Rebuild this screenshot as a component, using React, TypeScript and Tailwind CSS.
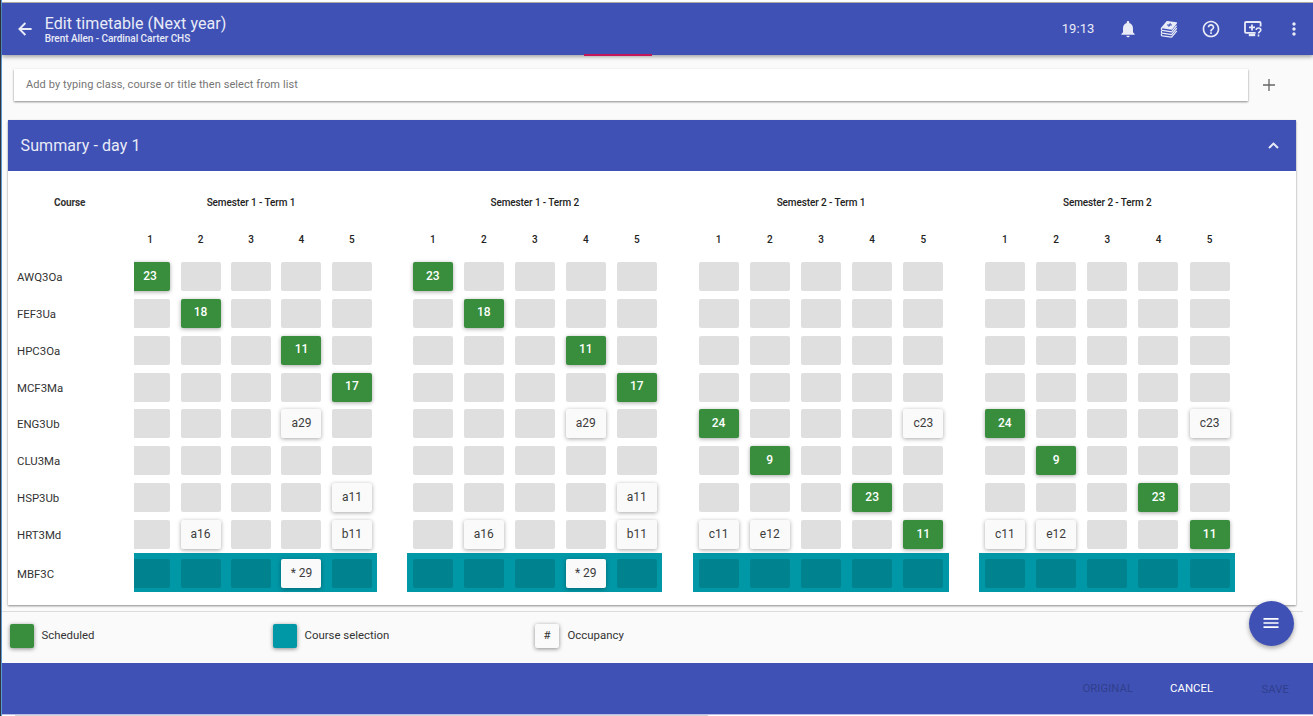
import React from "react";
import { MdNotifications, MdHelpOutline, MdMoreVert, MdMenu } from "react-icons/md";

type Cell = string;

const courses = ["AWQ3Oa", "FEF3Ua", "HPC3Oa", "MCF3Ma", "ENG3Ub", "CLU3Ma", "HSP3Ub", "HRT3Md", "MBF3C"];

// "!" marks a scheduled class; other non-empty values are occupancy cards.
const first: Cell[][] = [
  ["!23", "", "", "", ""],
  ["", "!18", "", "", ""],
  ["", "", "", "!11", ""],
  ["", "", "", "", "!17"],
  ["", "", "", "a29", ""],
  ["", "", "", "", ""],
  ["", "", "", "", "a11"],
  ["", "a16", "", "", "b11"],
  ["", "", "", "* 29", ""],
];

const second: Cell[][] = [
  ["", "", "", "", ""],
  ["", "", "", "", ""],
  ["", "", "", "", ""],
  ["", "", "", "", ""],
  ["!24", "", "", "", "c23"],
  ["", "!9", "", "", ""],
  ["", "", "", "!23", ""],
  ["c11", "e12", "", "", "!11"],
  ["", "", "", "", ""],
];

const terms = [
  { title: "Semester 1 - Term 1", rows: first, box: "w-[243px]", inner: "w-[252.4px] ml-[-9.5px]" },
  { title: "Semester 1 - Term 2", rows: first, box: "w-[255px] ml-[30px]", inner: "w-[255px]" },
  { title: "Semester 2 - Term 1", rows: second, box: "w-[256px] ml-[30.7px]", inner: "w-[256px]" },
  { title: "Semester 2 - Term 2", rows: second, box: "w-[256px] ml-[30.3px]", inner: "w-[256px]" },
];

function Slot({ value, selection }: { value: Cell; selection: boolean }) {
  const base = `flex h-[29px] w-[40px] items-center justify-center rounded-[2px] text-[12px] ${selection ? "pb-[1px]" : "pb-[2px]"}`;
  if (value.startsWith("!"))
    return (
      <div className={`${base} bg-[#388e3c] font-medium text-white shadow-[0_1px_4px_rgba(0,0,0,0.35)]`}>
        {value.slice(1)}
      </div>
    );
  if (value)
    return (
      <div className={`${base} bg-[#fafafa] text-[#3c3c3c] shadow-[0_1px_4px_rgba(0,0,0,0.35)]`}>{value}</div>
    );
  return <div className={`${base} ${selection ? "bg-[#00838f]" : "bg-[#dfdfdf]"}`} />;
}

function Term({ term }: { term: (typeof terms)[number] }) {
  return (
    <section className={`shrink-0 overflow-hidden ${term.box}`}>
      <div className={term.inner}>
        <h3 className="flex h-[62px] items-center justify-center text-[10px] font-medium tracking-[-0.1px] text-[#222]">
          {term.title}
        </h3>
        <div className="grid h-[25.2px] grid-cols-5 text-center text-[10px] leading-[13px] font-medium text-[#222]">
          {[1, 2, 3, 4, 5].map((n) => (
            <span key={n}>{n}</span>
          ))}
        </div>
      </div>
      {term.rows.map((row, i) => (
        <div key={i} className={i === 8 ? "bg-[#0097a7]" : ""}>
          <div className={`grid grid-cols-5 items-center justify-items-center ${term.inner} ${i === 8 ? "h-[39px] pt-[2px]" : "h-[36.85px]"}`}>
            {row.map((value, j) => (
              <Slot key={j} value={value} selection={i === 8} />
            ))}
          </div>
        </div>
      ))}
    </section>
  );
}

function BackIcon() {
  return (
    <svg viewBox="0 0 14 14" className="size-[14px]" fill="none" stroke="currentColor" strokeWidth="1.9">
      <path d="M13.6 7H1.6M7.4 1 1.4 7l6 6" />
    </svg>
  );
}

function BooksIcon() {
  return (
    <svg viewBox="0 0 18 18" className="size-[18px]" fill="none" stroke="currentColor" strokeWidth="1.3" strokeLinejoin="round">
      <path d="M7 1.6 16.4 3 11.6 9 2 7.6Z" fill="currentColor" />
      <path d="M2 7.8c-1 .7-.8 2.1.3 2.6l9.3 1.5 5-6.2" />
      <path d="M1.8 10.9c-.8.8-.5 1.9.5 2.3l9.3 1.4 5.2-6.4" />
      <path d="M1.8 13.5c-.8.8-.5 1.9.5 2.3l9.3 1.4 5.2-6.4" />
      <path d="M7 5h5M10.4 3.2 8.6 6.8" stroke="#3f51b5" strokeWidth="1.1" />
    </svg>
  );
}

function ScreenHelpIcon() {
  return (
    <svg viewBox="0 0 18 16" className="h-[16px] w-[18px]" fill="none" stroke="currentColor" strokeWidth="1.8">
      <path d="M16.6 5.4V2q0-1-1-1H2q-1 0-1 1v8.8q0 1 1 1h9.6" />
      <path d="M4.8 14h6.4" strokeWidth="2.4" />
      <path d="M8 3.4v6M5 6.4h6" />
      <path d="M12.2 9c0-2.8 4.6-2.6 4.6 0 0 1.7-2.3 1.6-2.3 3.6M14.5 13.6v1.8" strokeWidth="1.6" />
    </svg>
  );
}

export default function App() {
  return (
    <div className="flex h-[716px] w-[1313px] overflow-hidden bg-[#fafafa] font-['Roboto',sans-serif] text-[#333]">
      <div className="w-[2px] shrink-0 border-r border-[#5b9bd5] bg-[#34343c]" />
      <div className="flex min-w-0 flex-1 flex-col">
        <div className="h-[3px] shrink-0 border-b border-[#b5b2a8] bg-white" />
        <header className="relative z-10 flex h-[52px] shrink-0 items-center bg-[#3f51b5] pr-[9px] pl-[15.5px] text-[#e9ebf7] shadow-[0_2px_4px_rgba(0,0,0,0.35)]">
          <BackIcon />
          <div className="ml-[13.2px] flex-1 pb-[1px]">
            <h1 className="text-[16px] leading-[19px] tracking-[0.06px]">Edit timetable (Next year)</h1>
            <p className="text-[10px] leading-[11px] font-medium tracking-[-0.05px]">Brent Allen - Cardinal Carter CHS</p>
          </div>
          <span className="text-[13px] tracking-[0.1px]">19:13</span>
          <MdNotifications className="ml-[23px] size-[20px]" />
          <div className="ml-[22.5px]"><BooksIcon /></div>
          <MdHelpOutline className="ml-[23px] size-[20px]" />
          <div className="ml-[23px]"><ScreenHelpIcon /></div>
          <MdMoreVert className="ml-[22px] size-[20px]" />
          <div className="absolute bottom-[-1px] left-[582px] h-[2px] w-[68px] bg-[#c2185b]" />
        </header>

        <div className="flex shrink-0 items-center pt-[14px] pl-[12px]">
          <div className="flex h-[32px] w-[1234px] items-center bg-white pl-[12px] text-[11px] tracking-[0.09px] text-[#757575] shadow-[0_1px_2px_rgba(0,0,0,0.45)]">
            Add by typing class, course or title then select from list
          </div>
          <svg viewBox="0 0 12 12" className="ml-[15px] size-[12px]" stroke="#666" strokeWidth="1.3">
            <path d="M6 0v12M0 6h12" />
          </svg>
        </div>

        <main className="mt-[19px] ml-[6px] flex h-[485px] w-[1288px] shrink-0 flex-col bg-white shadow-[0_1px_2px_rgba(0,0,0,0.45)]">
          <div className="flex h-[51px] shrink-0 items-center justify-between bg-[#3f51b5] pr-[17px] pl-[12.6px] text-[#e9ebf7]">
            <h2 className="pt-[1px] text-[16px] tracking-[0.08px]">Summary - day 1</h2>
            <svg viewBox="0 0 11 7" className="h-[7px] w-[11px]" fill="none" stroke="currentColor" strokeWidth="2">
              <path d="M1 6 5.5 1.6 10 6" />
            </svg>
          </div>
          <div className="flex">
            <div className="w-[126.3px] shrink-0 pl-[9px]">
              <div className="flex h-[87.2px] justify-center pt-[24.5px] pr-[12px] text-[10px] leading-[14px] font-bold tracking-[-0.1px]">Course</div>
              {courses.map((name, i) => (
                <div key={name} className={`flex items-center text-[11.4px] ${i === 8 ? "h-[43px]" : "h-[36.85px] pt-[2px]"}`}>
                  {name}
                </div>
              ))}
            </div>
            {terms.map((term) => (
              <Term key={term.title} term={term} />
            ))}
          </div>
        </main>

        <div className="mt-[6px] h-px w-[1301px] shrink-0 bg-[#dcdcdc]" />
        <div className="flex h-[51px] shrink-0 items-center pb-[3px] pl-[7.5px] text-[11.4px]">
          <div className="flex w-[263.5px] items-center gap-[8px]">
            <span className="size-[24px] rounded-[2px] bg-[#388e3c] shadow-[0_1px_4px_rgba(0,0,0,0.45)]" />
            Scheduled
          </div>
          <div className="flex w-[262px] items-center gap-[7.5px]">
            <span className="size-[24px] rounded-[2px] bg-[#0097a7] shadow-[0_1px_4px_rgba(0,0,0,0.45)]" />
            Course selection
          </div>
          <div className="flex flex-1 items-center gap-[8.5px]">
            <span className="flex size-[24px] items-center justify-center rounded-[2px] bg-[#fafafa] shadow-[0_1px_4px_rgba(0,0,0,0.45)]">#</span>
            Occupancy
          </div>
          <button className="mr-[19.5px] mb-[26px] flex size-[45px] shrink-0 items-center justify-center rounded-full bg-[#3f51b5] text-white shadow-[0_2px_5px_rgba(0,0,0,0.35)]">
            <MdMenu className="size-[20px]" />
          </button>
        </div>
        <footer className="flex h-[51px] shrink-0 items-center justify-end bg-[#3f51b5] pr-[24px] text-[11.4px] text-[#303f8d]">
          <span>ORIGINAL</span>
          <span className="ml-[37px] text-white">CANCEL</span>
          <span className="mt-[3px] ml-[48.5px]">SAVE</span>
        </footer>
        <div className="h-[2px] shrink-0 border-t border-[#b9c0e6] bg-white">
          <div className="ml-[13px] h-px w-[693px] bg-[#d6d6d6]" />
        </div>
      </div>
    </div>
  );
}
